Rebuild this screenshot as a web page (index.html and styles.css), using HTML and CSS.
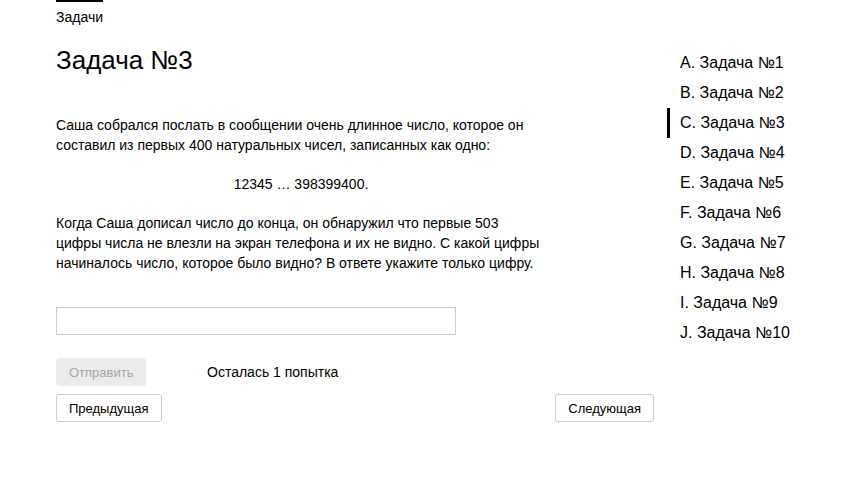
FILE: index.html
```html
<!DOCTYPE html>
<html lang="ru">
<head>
<meta charset="utf-8">
<title>Задача №3</title>
<link rel="stylesheet" href="styles.css">
</head>
<body>
<div class="page">
  <main class="main">
    <div class="crumbs"><a class="crumb" href="#">Задачи</a></div>
    <h1 class="title">Задача №3</h1>
    <div class="statement">
      <p class="para">Саша собрался послать в сообщении очень длинное число, которое он составил из первых 400 натуральных чисел, записанных как одно:</p>
      <p class="para center">12345 … 398399400.</p>
      <p class="para">Когда Саша дописал число до конца, он обнаружил что первые 503 цифры числа не влезли на экран телефона и их не видно. С какой цифры начиналось число, которое было видно? В ответе укажите только цифру.</p>
    </div>
    <input class="answer" type="text">
    <div class="submit-row">
      <button class="btn btn-disabled" disabled>Отправить</button>
      <span class="attempts">Осталась 1 попытка</span>
    </div>
    <div class="nav-row">
      <button class="btn">Предыдущая</button>
      <button class="btn">Следующая</button>
    </div>
  </main>
  <aside class="side">
    <ul class="tasks">
      <li class="task">A. Задача №1</li>
      <li class="task">B. Задача №2</li>
      <li class="task active">C. Задача №3</li>
      <li class="task">D. Задача №4</li>
      <li class="task">E. Задача №5</li>
      <li class="task">F. Задача №6</li>
      <li class="task">G. Задача №7</li>
      <li class="task">H. Задача №8</li>
      <li class="task">I. Задача №9</li>
      <li class="task">J. Задача №10</li>
    </ul>
  </aside>
</div>
</body>
</html>
```
FILE: styles.css
```css
* { box-sizing: border-box; }
html, body { margin: 0; padding: 0; background: #fff; }
body {
  font-family: "Liberation Sans", Arial, sans-serif;
  color: #000;
}
.page {
  display: flex;
  padding-left: 56px;
}
.main {
  width: 598px;
  display: flex;
  flex-direction: column;
  align-items: flex-start;
}
.crumbs { height: 28px; }
.crumb {
  display: inline-block;
  border-top: 2px solid #000;
  padding-top: 7px;
  font-size: 14px;
  line-height: 16px;
  color: #000;
  text-decoration: none;
}
.title {
  margin: 16px 0 0;
  font-size: 26px;
  font-weight: normal;
  line-height: 32px;
}
.statement {
  margin-top: 39px;
  width: 490px;
  font-size: 14px;
  line-height: 20px;
}
.para { margin: 0 0 19px; }
.center { text-align: center; }
.answer {
  margin-top: 15px;
  width: 400px;
  height: 28px;
  border: 1px solid #ccc;
  padding: 0 6px;
  font: 14px "Liberation Sans", Arial, sans-serif;
}
.submit-row {
  margin-top: 23px;
  display: flex;
  align-items: center;
  gap: 61px;
}
.attempts { font-size: 14px; }
.btn {
  font: 13px "Liberation Sans", Arial, sans-serif;
  color: #000;
  background: #fff;
  border: 1px solid #ccc;
  border-radius: 3px;
  height: 28px;
  padding: 0 12px;
}
.btn-disabled {
  background: #ebebeb;
  border-color: #ebebeb;
  color: #a8a8a8;
  width: 90px;
}
.nav-row {
  margin-top: 8px;
  width: 100%;
  display: flex;
  justify-content: space-between;
}
.side { padding-top: 48px; }
.tasks { list-style: none; margin: 0; padding: 0; }
.task {
  height: 30px;
  line-height: 30px;
  font-size: 16px;
  padding-left: 10px;
  border-left: 3px solid transparent;
  margin-left: 13px;
}
.task.active {
  border-left-color: #000;
}
```
